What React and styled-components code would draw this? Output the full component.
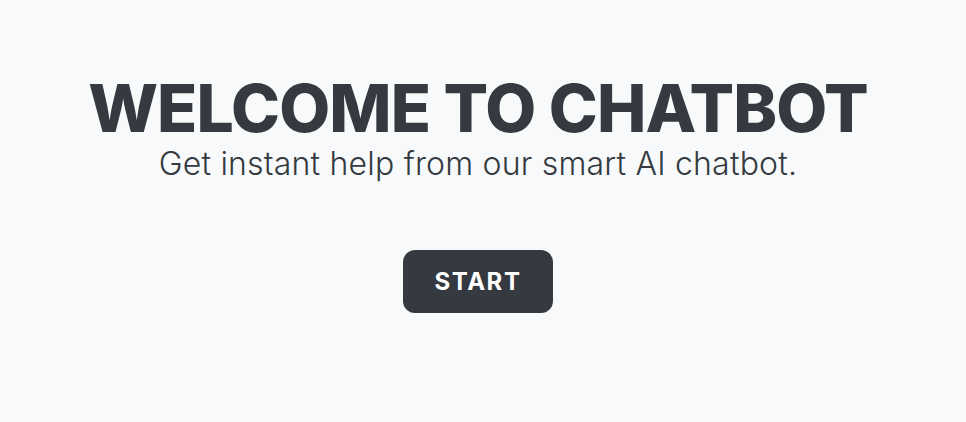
import React from 'react';
import styled, { createGlobalStyle } from 'styled-components';

const GlobalStyle = createGlobalStyle`
  html, body {
    margin: 0;
    padding: 0;
    background: #f8f9fa;
    font-family: Inter, "Noto Sans", sans-serif;
    color: #343a40;
  }
`

const Page = styled.main`
  min-height: 422px;
  display: flex;
  flex-direction: column;
  align-items: center;
  padding: 72px 10px 0 0;
  box-sizing: border-box;
`

const Title = styled.h1`
  margin: 0;
  font-size: 66px;
  font-weight: 800;
  line-height: 72px;
  letter-spacing: -0.9px;
  color: #343a40;
`

const Subtitle = styled.p`
  margin: 0;
  font-size: 32px;
  font-weight: 300;
  line-height: 40px;
  letter-spacing: 0.2px;
  color: #343a40;
`

const StartButton = styled.button`
  margin-top: 66px;
  width: 150px;
  height: 63px;
  border: none;
  border-radius: 12px;
  background: #343a40;
  color: #fff;
  font-family: Inter, "Noto Sans", sans-serif;
  font-size: 24px;
  font-weight: 700;
  letter-spacing: 1.5px;
  cursor: pointer;
`

const App = () => {
  return (
    <>
      <GlobalStyle />
      <Page>
        <Title>WELCOME TO CHATBOT</Title>
        <Subtitle>Get instant help from our smart AI chatbot.</Subtitle>
        <StartButton>START</StartButton>
      </Page>
    </>
  )
}

export default App
